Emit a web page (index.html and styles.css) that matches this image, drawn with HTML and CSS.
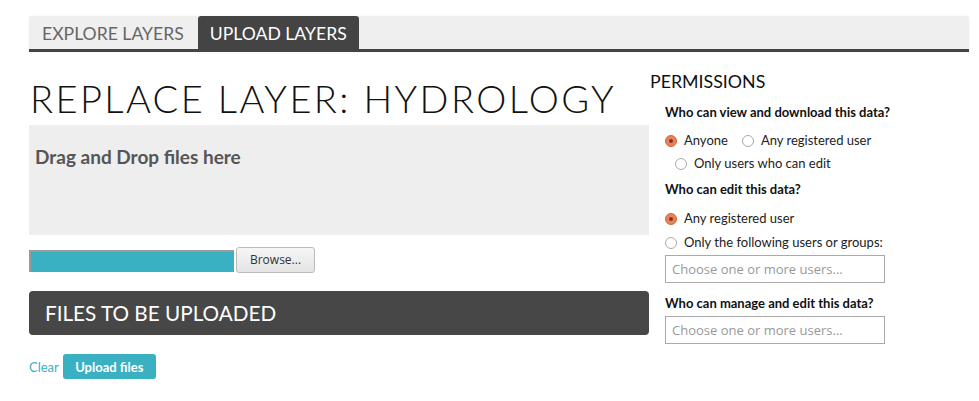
FILE: index.html
```html
<!DOCTYPE html>
<html>
<head>
<meta charset="utf-8">
<link rel="stylesheet" href="styles.css">
</head>
<body>
<div class="page">
  <nav class="tabs">
    <a class="tab">EXPLORE LAYERS</a>
    <a class="tab active">UPLOAD LAYERS</a>
  </nav>
  <div class="content">
    <main class="main">
      <h1 class="title">REPLACE LAYER: HYDROLOGY</h1>
      <div class="dropzone">Drag and Drop files here</div>
      <div class="fileline">
        <div class="progress"></div>
        <button class="browse">Browse...</button>
      </div>
      <div class="files-bar">FILES TO BE UPLOADED</div>
      <div class="actions">
        <a class="clear">Clear</a>
        <button class="upload">Upload files</button>
      </div>
    </main>
    <aside class="perms">
      <h2 class="perms-title">PERMISSIONS</h2>
      <div class="group">
        <div class="q">Who can view and download this data?</div>
        <div class="radios row1">
          <label class="radio"><span class="dot on"></span>Anyone</label>
          <label class="radio"><span class="dot"></span>Any registered user</label>
        </div>
        <div class="radios row2">
          <label class="radio"><span class="dot"></span>Only users who can edit</label>
        </div>
      </div>
      <div class="group">
        <div class="q">Who can edit this data?</div>
        <div class="radios row3">
          <label class="radio"><span class="dot on"></span>Any registered user</label>
        </div>
        <div class="radios row4">
          <label class="radio"><span class="dot"></span>Only the following users or groups:</label>
        </div>
        <div class="input first">Choose one or more users...</div>
      </div>
      <div class="group last">
        <div class="q">Who can manage and edit this data?</div>
        <div class="input">Choose one or more users...</div>
      </div>
    </aside>
  </div>
</div>
</body>
</html>
```
FILE: styles.css
```css
* { box-sizing: border-box; }
body {
  margin: 0;
  background: #fff;
  font-family: Lato, "Open Sans", sans-serif;
  color: #333;
}
.page { padding: 16px 10px 0 29px; }
.tabs {
  display: flex;
  height: 36px;
  background: #efefef;
  border-bottom: 3px solid #444;
  border-radius: 3px 3px 0 0;
  box-shadow: 0 0 2px rgba(0,0,0,0.08);
}
.tab {
  display: flex;
  align-items: center;
  padding: 2px 14px 0 13px;
  font-size: 17.6px;
  color: #666;
}
.tab.active {
  padding: 2px 12px 0 12px;
  background: #444;
  color: #fff;
  border-radius: 3px 3px 0 0;
}
.content { display: flex; }
.main { width: 620px; flex: none; }
.title {
  margin: 24px 0 0 1px;
  font-weight: 300;
  font-size: 38px;
  letter-spacing: 2.4px;
  line-height: 44px;
  color: #111;
  height: 49px;
  white-space: nowrap;
}
.dropzone {
  margin-top: 0;
  height: 110px;
  background: #eeeeee;
  padding: 20px 6px;
  font-weight: 700;
  font-size: 19px;
  color: #555;
}
.fileline {
  display: flex;
  align-items: center;
  margin-top: 11px;
  height: 27px;
}
.progress {
  width: 205px;
  height: 22px;
  background: #3ab0c3;
  border-top: 2px solid #999;
  border-left: 2px solid #999;
  margin-top: 2px;
}
.browse {
  margin-left: 2px;
  height: 26px;
  width: 79px;
  font-family: "Open Sans", sans-serif;
  font-size: 12px;
  color: #333;
  background: linear-gradient(#f6f6f6, #e4e4e4);
  border: 1px solid #bbb;
  border-radius: 3px;
  padding: 0;
}
.files-bar {
  margin-top: 18px;
  height: 44px;
  background: #474747;
  border-radius: 4px;
  color: #fff;
  font-size: 20.7px;
  display: flex;
  align-items: center;
  padding-left: 16px;
}
.actions {
  margin-top: 19px;
  display: flex;
  align-items: center;
}
.clear { color: #3ab0c3; font-size: 13px; margin-right: 4px; }
.upload {
  background: #3ab0c3;
  color: #fff;
  border: 0;
  border-radius: 3px;
  font-family: Lato, sans-serif;
  font-weight: 700;
  font-size: 13px;
  height: 25px;
  width: 93px;
  padding: 0;
}
.perms { margin-left: 1px; width: 320px; }
.perms-title {
  margin: 19px 0 0 0;
  font-weight: 400;
  font-size: 17.8px;
  color: #111;
  line-height: 20px;
}
.group { padding-left: 15px; }
.q {
  font-weight: 700;
  font-size: 13px;
  color: #111;
  margin-top: 13px;
  line-height: 16px;
}
.group + .group .q { margin-top: 9px; }
.group.last .q { margin-top: 12px; }
.radios { display: flex; font-size: 13px; color: #222; }
.row1 { margin-top: 12px; }
.row2 { margin-top: 6px; padding-left: 10px; }
.row3 { margin-top: 13px; }
.row4 { margin-top: 7px; }
.radio { display: flex; align-items: center; margin-right: 14px; line-height: 17px; }
.dot {
  width: 12px; height: 12px;
  border-radius: 50%;
  border: 1px solid #aaa;
  background: #fff;
  margin-right: 7px;
  position: relative;
}
.dot.on {
  background: #e8825a;
  border-color: #d0663e;
}
.dot.on::after {
  content: "";
  position: absolute;
  left: 3px; top: 3px;
  width: 4px; height: 4px;
  border-radius: 50%;
  background: #7a3a22;
}
.input {
  margin-top: 5px;
  width: 220px;
  height: 28px;
  border: 1px solid #aaa;
  font-family: "Open Sans", sans-serif;
  font-size: 13px;
  color: #999;
  padding: 4px 6px;
  line-height: 18px;
}
.input.first { margin-top: 4px; }
```
